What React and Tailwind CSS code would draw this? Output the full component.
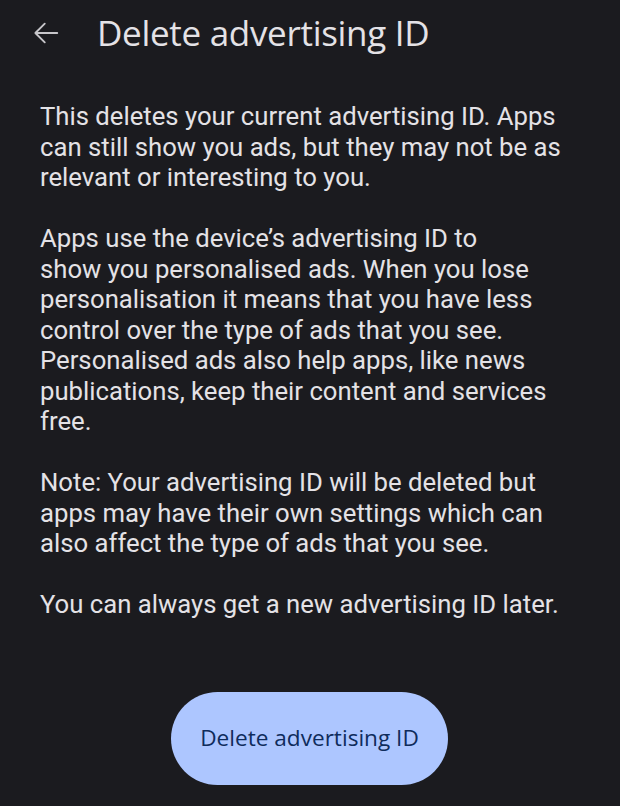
import React from "react";

const paras = [
  [
    "This deletes your current advertising ID. Apps",
    "can still show you ads, but they may not be as",
    "relevant or interesting to you.",
  ],
  [
    "Apps use the device’s advertising ID to",
    "show you personalised ads. When you lose",
    "personalisation it means that you have less",
    "control over the type of ads that you see.",
    "Personalised ads also help apps, like news",
    "publications, keep their content and services",
    "free.",
  ],
  [
    "Note: Your advertising ID will be deleted but",
    "apps may have their own settings which can",
    "also affect the type of ads that you see.",
  ],
  ["You can always get a new advertising ID later."],
];

export default function App() {
  const body = { fontFamily: "Roboto, 'Noto Sans', sans-serif" };
  const head = { fontFamily: "'Open Sans', Roboto, sans-serif" };
  return (
    <div className="w-[620px] h-[806px] bg-[#1b1b1f] text-[#e4e2e6] flex flex-col overflow-hidden">
      <div className="flex items-center h-[66px] pl-[31px]">
        <svg width="30" height="30" viewBox="0 0 24 24" className="text-[#c7c6ca]">
          <path d="M21 12H3.5M11 4.5L3.5 12l7.5 7.5" fill="none" stroke="currentColor" strokeWidth="1.5" strokeLinecap="round" strokeLinejoin="round" />
        </svg>
        <div className="ml-[36px] text-[35px] tracking-[-0.3px]" style={head}>Delete advertising ID</div>
      </div>
      <div className="pl-[40px] pr-[20px] pt-[35px] text-[25.7px] leading-[30.5px] flex flex-col gap-[30.5px] whitespace-nowrap" style={body}>
        {paras.map((lines, i) => (
          <p key={i} className="flex flex-col">
            {lines.map((l, j) => (
              <span key={j}>{l}</span>
            ))}
          </p>
        ))}
      </div>
      <div className="flex justify-center mt-[72px]">
        <button className="ml-[-1px] w-[277px] h-[93px] rounded-full bg-[#adc6ff] text-[#0f2c5c] text-[22.6px]" style={head}>
          Delete advertising ID
        </button>
      </div>
    </div>
  );
}
